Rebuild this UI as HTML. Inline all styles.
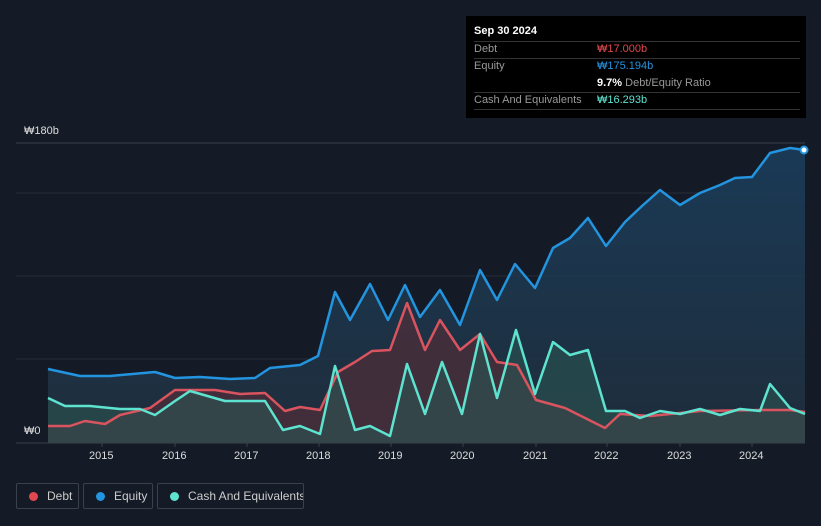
<!DOCTYPE html><html><head><style>
body{margin:0;width:821px;height:526px;background:#151b26;font-family:"Liberation Sans",sans-serif;overflow:hidden;position:relative}
.tt{position:absolute;left:466px;top:16px;width:340px;height:102px;background:#000}
.tt div{position:absolute;font-size:11px;color:#999;white-space:nowrap}
.ln{position:absolute;left:8px;width:326px;height:1px;background:#333}
.lg{position:absolute;top:483px;height:26px;border:1px solid #3a404c;border-radius:2px;color:#ccc;font-size:12px;line-height:25px;box-sizing:border-box;white-space:nowrap;overflow:hidden}
.lg i{display:inline-block;width:9px;height:9px;border-radius:50%;margin:0 9px 0 12px;vertical-align:-1px}
.ax{position:absolute;top:450px;font-size:11px;color:#ddd}
</style></head><body>
<svg width="821" height="526" style="position:absolute;left:0;top:0">
<defs><linearGradient id="g" x1="0" y1="0" x2="0" y2="1"><stop offset="0" stop-color="#1b3f5e"/><stop offset="1" stop-color="#20303f"/></linearGradient></defs>
<line x1="16" y1="143" x2="805" y2="143" stroke="#3a404a"/>
<line x1="16" y1="193" x2="805" y2="193" stroke="#262d38"/>
<line x1="16" y1="276" x2="805" y2="276" stroke="#262d38"/>
<line x1="16" y1="359" x2="805" y2="359" stroke="#262d38"/>
<polygon fill="url(#g)" opacity="0.85" points="48,443 48,369 80,376 110,376 155,372 175,378 200,377 230,379 255,378 270,368 300,365 318,356 335,292 350,320 370,284 388,320 405,285 420,317 440,290 460,325 480,270 497,300 515,264 535,288 553,248 570,238 588,218 606,246 625,222 642,206 660,190 680,205 700,193 720,185 735,178 752,177 770,153 790,148 805,150 805,443"/>
<polygon fill="#4a2e3a" opacity="0.8" points="48,443 48,426 70,426 85,421 105,424 120,415 150,408 175,390 215,390 240,394 265,393 285,411 300,407 320,410 338,372 355,362 372,351 390,350 407,303 425,350 440,320 460,350 480,334 497,362 517,365 536,400 565,408 605,428 620,414 650,416 700,411 760,410 790,410 805,412 805,443"/>
<polygon fill="#2a5552" opacity="0.6" points="48,443 48,398 65,406 90,406 120,409 140,409 155,415 175,401 190,391 225,401 265,401 283,430 300,426 320,434 335,366 355,430 370,426 390,436 407,364 425,414 442,362 462,414 480,334 497,398 516,330 535,394 553,342 570,355 588,350 606,411 625,411 640,418 660,411 680,414 700,409 720,415 740,409 760,411 770,384 790,408 805,414 805,443"/>
<g fill="none" stroke-width="2.5" stroke-linejoin="round">
<polyline stroke="#2394df" points="48,369 80,376 110,376 155,372 175,378 200,377 230,379 255,378 270,368 300,365 318,356 335,292 350,320 370,284 388,320 405,285 420,317 440,290 460,325 480,270 497,300 515,264 535,288 553,248 570,238 588,218 606,246 625,222 642,206 660,190 680,205 700,193 720,185 735,178 752,177 770,153 790,148 805,150"/>
<polyline stroke="#d9545f" points="48,426 70,426 85,421 105,424 120,415 150,408 175,390 215,390 240,394 265,393 285,411 300,407 320,410 338,372 355,362 372,351 390,350 407,303 425,350 440,320 460,350 480,334 497,362 517,365 536,400 565,408 605,428 620,414 650,416 700,411 760,410 790,410 805,412"/>
<polyline stroke="#5de3cf" points="48,398 65,406 90,406 120,409 140,409 155,415 175,401 190,391 225,401 265,401 283,430 300,426 320,434 335,366 355,430 370,426 390,436 407,364 425,414 442,362 462,414 480,334 497,398 516,330 535,394 553,342 570,355 588,350 606,411 625,411 640,418 660,411 680,414 700,409 720,415 740,409 760,411 770,384 790,408 805,414"/>
</g>
<circle cx="804" cy="150" r="3.5" fill="#fff" stroke="#2394df" stroke-width="2"/>
<rect x="16" y="420" width="32" height="23" fill="#151b26"/>
<line x1="16" y1="443" x2="805" y2="443" stroke="#3a404a"/>
<g stroke="#3a404a"><line x1="102" y1="443" x2="102" y2="447"/><line x1="175" y1="443" x2="175" y2="447"/><line x1="247" y1="443" x2="247" y2="447"/><line x1="319" y1="443" x2="319" y2="447"/><line x1="391" y1="443" x2="391" y2="447"/><line x1="463" y1="443" x2="463" y2="447"/><line x1="536" y1="443" x2="536" y2="447"/><line x1="607" y1="443" x2="607" y2="447"/><line x1="680" y1="443" x2="680" y2="447"/><line x1="752" y1="443" x2="752" y2="447"/></g>
</svg>
<div style="position:absolute;left:24px;top:125px;font-size:11px;color:#ddd">₩180b</div>
<div style="position:absolute;left:24px;top:425px;font-size:11px;color:#ddd">₩0</div>
<div class="ax" style="left:89px">2015</div><div class="ax" style="left:162px">2016</div><div class="ax" style="left:234px">2017</div><div class="ax" style="left:306px">2018</div><div class="ax" style="left:378px">2019</div><div class="ax" style="left:450px">2020</div><div class="ax" style="left:523px">2021</div><div class="ax" style="left:594px">2022</div><div class="ax" style="left:667px">2023</div><div class="ax" style="left:739px">2024</div>
<div class="tt">
<div style="left:8px;top:9px;color:#fff;font-weight:bold;font-size:11px">Sep 30 2024</div>
<span class="ln" style="top:25px"></span>
<div style="left:8px;top:27px">Debt</div><div style="left:131px;top:27px;color:#e0484e">₩17.000b</div>
<span class="ln" style="top:42px"></span>
<div style="left:8px;top:44px">Equity</div><div style="left:131px;top:44px;color:#2394df">₩175.194b</div>
<div style="left:131px;top:61px"><b style="color:#fff">9.7%</b> Debt/Equity Ratio</div>
<span class="ln" style="top:76px"></span>
<div style="left:8px;top:78px">Cash And Equivalents</div><div style="left:131px;top:78px;color:#5de3cf">₩16.293b</div>
<span class="ln" style="top:93px"></span>
</div>
<div class="lg" style="left:16px;width:63px"><i style="background:#e0484e"></i>Debt</div>
<div class="lg" style="left:83px;width:70px"><i style="background:#2394df"></i>Equity</div>
<div class="lg" style="left:157px;width:147px"><i style="background:#5de3cf"></i>Cash And Equivalents</div>
</body></html>
